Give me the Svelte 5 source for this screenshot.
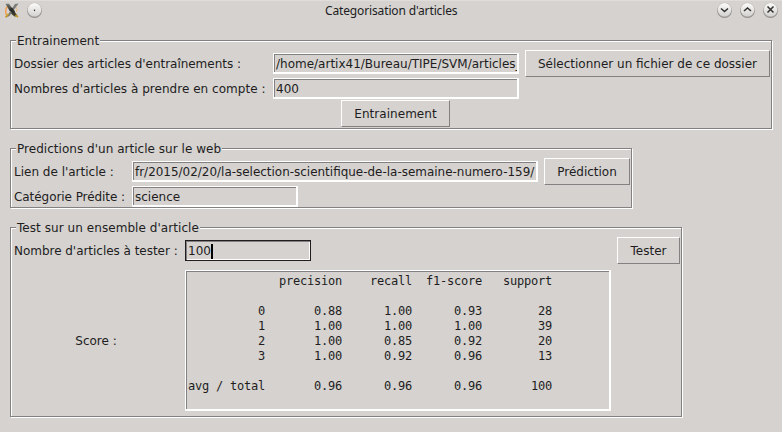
<script>
  const header = ['', 'precision', 'recall', 'f1-score', 'support'];
  const rows = [
    ['0', '0.88', '1.00', '0.93', '28'],
    ['1', '1.00', '1.00', '1.00', '39'],
    ['2', '1.00', '0.85', '0.92', '20'],
    ['3', '1.00', '0.92', '0.96', '13']
  ];
  const total = ['avg / total', '0.96', '0.96', '0.96', '100'];
  const widths = [11, 11, 10, 10, 10];
  const line = (cells) => cells.map((c, i) => c.padStart(widths[i])).join('');
  const report = [line(header), '', ...rows.map(line), '', line(total)].join('\n');
</script>

{#snippet round(d)}
  <svg class="round" width="17" height="18" viewBox="0 0 17 18">
    <circle cx="8.5" cy="9.9" r="7.2" fill="#8d8a87" />
    <circle cx="8.5" cy="9.1" r="7.3" fill="#a7a4a1" />
    <circle cx="8.5" cy="8.8" r="6.8" fill="url(#knob)" />
    <path {d} fill="none" stroke="#303030" stroke-width="1.5" />
  </svg>
{/snippet}

<div class="window">
  <header>
    <svg class="logo" width="16" height="18" viewBox="0 0 16 18">
      <defs>
        <linearGradient id="knob" x1="0" y1="0" x2="0" y2="1">
          <stop offset="0" stop-color="#fbfbfa" />
          <stop offset="1" stop-color="#d3d1cf" />
        </linearGradient>
        <linearGradient id="blade" x1="0" y1="0" x2="0" y2="1">
          <stop offset="0" stop-color="#777b75" />
          <stop offset=".5" stop-color="#30332f" />
          <stop offset="1" stop-color="#484226" />
        </linearGradient>
      </defs>
      <path d="M3.500 4Q.5 8 2.500 13" fill="none" stroke="#f3a052" stroke-width="1.600" />
      <path d="M12 5Q13.500 7 12.500 10" fill="none" stroke="#eebb80" stroke-width="1" />
      <path d="M1.500 1.800H5L14 14.500H10.500L7.500 12Z" fill="url(#blade)" />
      <path d="M11 2L14.500 1.500L5.500 14L2 15.500Z" fill="#7a7d77" />
      <path d="M5.500 8L8 5.500L11 9.500L8.500 11.500Z" fill="#2b2e2a" />
      <path d="M1.500 15.200L4.500 12M11.500 13L14 15.200" stroke="#c99b23" stroke-width="1.600" />
    </svg>
    {@render round('M7.900 9.300H9.100')}
    <h1>Categorisation d'articles</h1>
    <div class="controls">
      {@render round('M5 7.500L8.500 10.500L12 7.500')}
      {@render round('M5 10L8.500 7L12 10')}
      {@render round('M5.500 5.500L11.500 11.500M11.500 5.500L5.500 11.500')}
    </div>
  </header>

  <section class="group train">
    <h2>Entrainement</h2>
    <div class="row first">
      <span class="label tight">Dossier des articles d'entraînements :</span>
      <div class="entry"><span>/home/artix41/Bureau/TIPE/SVM/articles_</span></div>
      <button class="pick">Sélectionner un fichier de ce dossier</button>
    </div>
    <div class="row second">
      <span class="label loose">Nombres d'articles à prendre en compte :</span>
      <div class="entry"><span>400</span></div>
    </div>
    <button class="go">Entrainement</button>
  </section>

  <section class="group predict">
    <h2>Predictions d'un article sur le web</h2>
    <div class="row first">
      <span class="label">Lien de l'article :</span>
      <div class="entry"><span class="link">fr/2015/02/20/la-selection-scientifique-de-la-semaine-numero-159/</span></div>
      <button class="ask">Prédiction</button>
    </div>
    <div class="row second">
      <span class="label category">Catégorie Prédite :</span>
      <div class="entry short"><span>science</span></div>
    </div>
  </section>

  <section class="group test">
    <h2 class="wide">Test sur un ensemble d'article</h2>
    <div class="row first">
      <span class="label tight">Nombre d'articles à tester :</span>
      <div class="entry focus"><span>100</span><i></i></div>
      <button class="run">Tester</button>
    </div>
    <div class="row score">
      <span class="label center">Score :</span>
      <pre class="entry">{report}</pre>
    </div>
  </section>
</div>

<style>
  :global(body) { background: #d6d2cf; }
  .window {
    box-sizing: border-box;
    width: 782px;
    height: 432px;
    overflow: hidden;
    background: #d6d2cf;
    color: #211d1e;
    font: 12px/16px "DejaVu Sans", sans-serif;
    border-top: 1px solid #dfdcda;
  }
  header { display: flex; height: 39px; padding-left: 4px; align-items: flex-start; }
  .logo { margin: 0.5px 6px 0 0; }
  .round { display: block; }
  h1 {
    flex: 1;
    margin: 2px 0 0;
    padding-left: 282px;
    font: 12px/16px "Noto Sans", sans-serif;
    letter-spacing: -0.14px;
    white-space: nowrap;
  }
  .controls { display: flex; gap: 6px; padding-right: 3px; }
  .group {
    position: relative;
    box-sizing: border-box;
    margin-left: 10px;
    padding: 9px 0 0 3px;
    border: 1px solid #828080;
    box-shadow: 1px 1px 0 #fff, inset 1px 1px 0 #fff;
  }
  .train { width: 762px; height: 89px; }
  .predict { width: 622px; height: 60px; margin-top: 19px; }
  .test { width: 672px; height: 190px; margin-top: 19px; }
  h2 {
    position: absolute;
    left: 5px;
    top: -8px;
    margin: 0;
    padding: 0 1px;
    background: #d6d2cf;
    font: inherit;
    letter-spacing: 0.03px;
    white-space: nowrap;
  }
  .wide { letter-spacing: 0.06px; }
  .row { display: flex; align-items: center; white-space: nowrap; }
  .first { height: 27px; }
  .second { height: 21px; margin-top: 1px; }
  .label { flex: none; }
  .tight { letter-spacing: -0.03px; }
  .loose { letter-spacing: 0.03px; }
  .category { letter-spacing: -0.06px; }
  .train .label { width: 259px; }
  .predict .label { width: 118px; }
  .test .label { width: 171px; }
  .test .center { width: 164px; padding-right: 7px; text-align: center; }
  .entry {
    display: flex;
    flex: none;
    align-items: center;
    box-sizing: border-box;
    width: 246px;
    height: 21px;
    margin: 0;
    padding: 1px 0 0 2px;
    overflow: hidden;
    border: 1px solid #fff;
    border-right-width: 2px;
    border-bottom-width: 2px;
    box-shadow: inset 1px 1px 0 #828080;
  }
  .link { font-size: 11.96px; }
  .predict .entry { width: 406px; }
  .predict .short { width: 166px; }
  .test .focus {
    width: 126px;
    border: 1px solid #211d1e;
    box-shadow: inset 1px 1px 0 #828080, inset -1px -1px 0 #fff;
  }
  .focus i { width: 2px; height: 15px; background: #000; }
  button {
    flex: none;
    box-sizing: border-box;
    height: 27px;
    margin: 0 0 0 6px;
    padding: 0;
    border: 1px solid;
    border-color: #fff #828080 #828080 #fff;
    background: #d6d2cf;
    color: inherit;
    font: inherit;
    white-space: nowrap;
  }
  .pick { width: 245px; }
  .go { display: block; width: 109px; margin: 1px 0 0 327px; letter-spacing: 0.04px; }
  .ask { width: 86px; }
  .run { width: 63px; margin-left: 306px; }
  .score { margin-top: 6px; }
  pre.entry {
    display: block;
    width: 426px;
    height: 141px;
    padding: 3px 0 0 2px;
    font: 12px/15px "DejaVu Sans Mono", monospace;
    letter-spacing: -0.224px;
  }
</style>
